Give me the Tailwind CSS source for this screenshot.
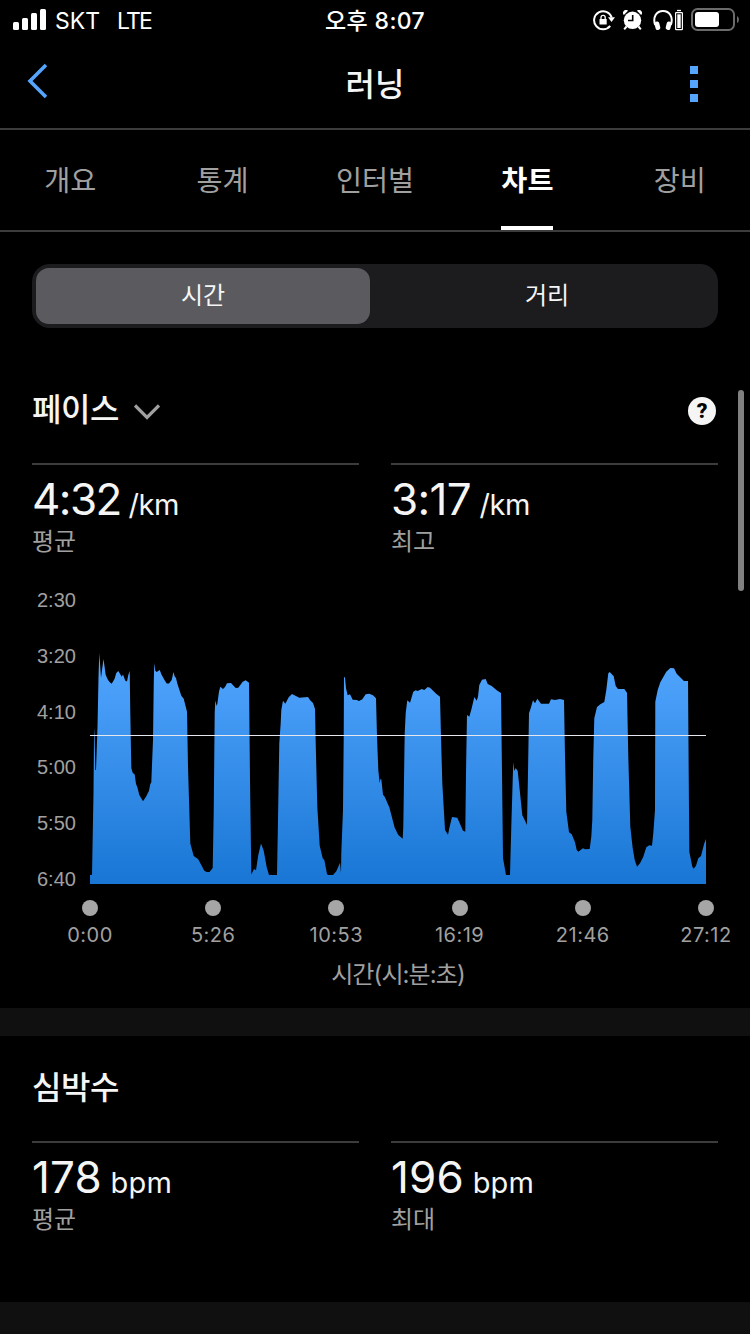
<!doctype html>
<html lang="ko">
	<head>
		<meta charset="UTF-8" />
		<meta name="viewport" content="width=device-width, initial-scale=1.0" />
		<title>러닝</title>
		<script src="https://cdn.jsdelivr.net/npm/@tailwindcss/browser@4"></script>
	</head>
	<body
		class="relative h-[1334px] w-[750px] overflow-hidden bg-black font-['Inter','Noto_Sans_CJK_KR',sans-serif] text-[#f5f5f5]"
	>
		<!-- Status bar -->
		<div class="grid h-10 grid-cols-3 items-center text-white">
			<div class="flex items-center pl-[13px] text-[23px] leading-[38px]">
				<svg class="mr-[9px] -mt-px h-[21px] w-[33px]" viewBox="0 0 33 21" fill="currentColor">
					<rect x="0" y="13" width="6" height="8" rx="1.5" />
					<rect x="9" y="9" width="6" height="12" rx="1.5" />
					<rect x="18" y="4" width="6" height="17" rx="1.5" />
					<rect x="27" y="0" width="6" height="21" rx="1.5" />
				</svg>
				<span class="pt-0.5">SKT</span>
				<span class="ml-[17px] pt-0.5 tracking-[-1.8px]">LTE</span>
			</div>
			<div class="pt-px text-center text-[23px] leading-[38px] font-medium tracking-[0.4px]">오후 8:07</div>
			<div class="flex items-center justify-end pr-[11px]">
				<!-- Rotation lock -->
				<svg class="mr-[8px] h-[22px] w-[22px]" viewBox="0 0 22 22" fill="none" stroke="#fff" stroke-width="2">
					<path d="M17.2 16.8A9 9 0 1 1 18.7 8.5" />
					<path d="M15 8.3h7l-3.5 4.6z" fill="#fff" stroke="none" />
					<rect x="6.5" y="10" width="7.2" height="5.6" rx=".6" fill="#fff" stroke="none" />
					<path d="M8 10.2V8.5a2.1 2.1 0 0 1 4.2 0v1.7" stroke-width="1.3" />
				</svg>
				<!-- Alarm -->
				<svg class="mr-[11px] h-5 w-[19px]" viewBox="0 0 19 20" fill="#fff">
					<circle cx="9.5" cy="10.3" r="8.7" />
					<path d="M.5 4.6A3 3 0 0 1 5 .7L.9 4.9zM18.5 4.6A3 3 0 0 0 14 .7l4.1 4.2z" />
					<path d="M3.5 16.5l-2.3 2.8M15.500 16.500l2.300 2.800" stroke="#fff" stroke-width="2" />
					<path d="M9.700 5v5.500H5" fill="none" stroke="#000" stroke-width="1.600" />
				</svg>
				<!-- Headphones with their battery -->
				<svg class="mr-[8px] h-[22px] w-[30px]" viewBox="0 0 30 22" fill="none">
					<path d="M2.200 16C-.6 8 3.500 2 10 2s10.600 6 7.800 14" stroke="#fff" stroke-width="2" />
					<rect x="2" y="12.500" width="4.800" height="8.500" rx="2" fill="#fff" transform="rotate(-14 4.400 16.700)" />
					<rect x="13.200" y="12.500" width="4.800" height="8.500" rx="2" fill="#fff" transform="rotate(14 15.600 16.700)" />
					<rect x="22.600" y="3.600" width="6.800" height="17" rx=".6" stroke="#fff" stroke-width="1.200" />
					<path d="M24 1.500h4" stroke="#fff" stroke-width="1.300" />
					<rect x="24.300" y="5.300" width="3.400" height="13.700" fill="#fff" />
				</svg>
				<!-- Phone battery -->
				<svg class="-mt-px h-[23px] w-12" viewBox="0 0 48 23">
					<rect x="1" y="1" width="42" height="21" rx="5.500" fill="none" stroke="#6b6b6b" stroke-width="2" />
					<rect x="4" y="4" width="24" height="15" rx="3" fill="#fff" />
					<path d="M46 8q2 1 2 3.500T46 15z" fill="#6b6b6b" />
				</svg>
			</div>
		</div>

		<!-- Header -->
		<header class="flex h-[90px] items-center justify-between border-b-2 border-[#3c3c3c] pr-[52px] pl-[27px]">
			<svg class="mt-[-6px] h-9 w-5" viewBox="0 0 20 36" fill="none" stroke="#54a5fb" stroke-width="3.600">
				<path d="M19 2 3 18l16 16" />
			</svg>
			<h1 class="ml-[13px] pt-0.5 text-[32px] leading-none font-medium">러닝</h1>
			<div class="flex flex-col gap-1.5">
				<span class="size-2 bg-[#54a5fb]"></span>
				<span class="size-2 bg-[#54a5fb]"></span>
				<span class="size-2 bg-[#54a5fb]"></span>
			</div>
		</header>

		<!-- Tabs -->
		<nav class="h-[102px] border-b-2 border-[#3c3c3c] text-[28.3px] text-[#a0a0a0]">
			<div class="-mx-1.5 grid h-[100px] grid-cols-5 justify-items-center leading-[102px]">
				<span>개요</span>
				<span>통계</span>
				<span>인터벌</span>
				<span class="h-[100px] border-b-4 border-white font-bold text-white">차트</span>
				<span>장비</span>
			</div>
		</nav>

		<!-- Time / distance switch -->
		<div class="mx-8 mt-8 grid h-16 grid-cols-[334px_1fr] rounded-[18px] bg-[#1c1c1e] p-1 text-center text-2xl leading-[56px]">
			<div class="rounded-[13px] bg-[#5b5a5f]">시간</div>
			<div class="pl-2.5">거리</div>
		</div>

		<main>
			<!-- Pace -->
			<section class="h-[680px] px-8 pt-[60px]">
				<div class="flex h-[42px] items-center">
					<h2 class="pt-0.5 text-[32px] leading-[42px] font-medium tracking-[-0.4px]">페이스</h2>
					<svg class="mt-1.5 ml-[15px] h-4 w-[26px]" viewBox="0 0 26 16" fill="none" stroke="#a0a0a0" stroke-width="3.200">
						<path d="m1 1.500 12 12 12-12" />
					</svg>
					<span
						class="mt-1 mr-0.5 ml-auto flex size-7 items-center justify-center rounded-full bg-[#f5f5f5] pt-px font-['Roboto',sans-serif] text-[21px] leading-none font-black text-black"
						>?</span
					>
				</div>
				<div class="mt-[33px] grid grid-cols-2 gap-8">
					<div class="border-t-2 border-[#3c3c3c]">
						<p class="mt-[7px] text-[44px] leading-[54px] tracking-[-1.6px]">4:32 <span class="ml-[-3px] text-[29px] tracking-[-0.4px]">/km</span></p>
						<p class="-mt-1 text-2xl leading-7 text-[#a0a0a0]">평균</p>
					</div>
					<div class="border-t-2 border-[#3c3c3c]">
						<p class="mt-[7px] text-[44px] leading-[54px] tracking-[-0.7px]">3:17 <span class="ml-[-3px] text-[29px] tracking-[-0.4px]">/km</span></p>
						<p class="-mt-1 text-2xl leading-7 text-[#a0a0a0]">최고</p>
					</div>
				</div>

				<!-- Chart: y labels, then the plot -->
				<div class="mt-[34px] flex h-[295px]">
					<div class="flex w-[58px] flex-col gap-[35.800px] pl-[5px] font-['Liberation_Sans',sans-serif] text-[20px] leading-5 text-[#a0a0a0]">
						<span>2:30</span>
						<span>3:20</span>
						<span>4:10</span>
						<span>5:00</span>
						<span>5:50</span>
						<span>6:40</span>
					</div>
					<svg class="h-[295px] w-[616px] shrink-0" viewBox="90 590 616 295">
						<defs>
							<linearGradient id="pace" gradientUnits="userSpaceOnUse" x1="0" y1="654" x2="0" y2="884">
								<stop offset="0" stop-color="#52a6ff" />
								<stop offset="1" stop-color="#1976d4" />
							</linearGradient>
						</defs>
						<path
							fill="url(#pace)"
							d="M90 884V875H92L93.500 793 94 737 94.500 728 95.300 770H96L97.500 727 98.500 677 99.300 653 101 678 102.300 668 103.500 659 105.700 675 108 680 110 682.500 111.700 683.700 114.500 679 116.300 673 118.300 671 121.700 676.700 123 674.500 125.300 680.700 127 681.500 128.300 675 129.700 671 130.300 713 131.300 768 132.700 772.700 134.700 774.500 136 784 137.300 787 139.300 795 143 801.300 146 796.700 149 790.700 150.300 784 151.300 782.500 153 740 153.800 680 154.300 663 155.300 670.700 156.700 672 159.700 670 161.700 675 164.500 680 166.700 683.500H169L171.700 680 173.500 672 174.700 676.500 176 678 177.300 683.500 181.300 695.700 183.700 698.700 187 711.700 188 766.700 190.300 843.500 193.700 856 198 859 201.700 865.700 204.300 870.700 206.700 872H209.500L212.700 868 213.700 813 214.700 713 215.300 700.500 216.700 706 217.300 704 219 691.500 220.300 686.700 223 689 225 687 227 683.300 231 683 235.700 688 238.300 687.700 242.700 681.700 245.700 680.300 249 682.700 250 780 251.300 874.500
							254 869 256 870.300 258.300 855 261 843.500 263.700 850.700 266.700 867.300 269 875H277L278 820 279.300 743.300 280.700 723.300 281.300 710 283 700.700 285.300 703.700 288.700 697.300 292 694 299.300 697.700 308 697 310 700 313 703 315 709 315.700 743 317.300 806.700 319.700 845.700 322.700 858.300 324.300 860 327 874 328 875H333L336.300 871.300 340 862.700 341 873.300 341.300 853 343 810 343.700 740 344 676.700 345 677.700 346 688.300 347.700 695.300 350 694.300 352.700 699.700 356.700 700 359 701 362.300 699.300 365.700 694.300 369.300 693.700 373 695.300 376 698.300 377 736.700 378.300 770 379.700 783.300 380.300 779.300H381.300L383 794.700 384.700 796.700 389.300 807.300 394.700 827.700 398.300 835 402.700 838.700 403.300 826.700 404.700 733.300 405.700 713.300 407.300 700.300 410 702.700 413.300 691.700 415.700 690.300 417.700 691 421.700 689 424.300 690 427.700 687 430 687.700 436.700 694.300 440 696.700 441 736.700 442.300 783.300 445 830 448 834.700 449.300 828.300 452 817 457.300 817.700 463 830.700 465.300 831.700
							466 773 467 715 469.300 716.700 471.700 708.300 474.300 697 476.700 700.700 478 696.700 479.300 685 482 679.700 485.700 679 487.700 684 491.700 686 496.700 690.300 501 693 502 773 503 858.300 506 875H510L511.300 826.700 512.700 780 513.300 762 514.300 771 515.700 768 517.700 771 519.700 790 522.300 815.300 524.700 820 527 825 528 773 529 713.300 530.700 708.300 533 700.300 535 703.300 537.300 698.700 541 703.700H549L551 699.300 555 700 560 699 564 700 565 756.700 566.300 811.700 569 832.300 571.700 834.300 575 842.300 576.700 850 578.300 851.700 583 848.300 585 849.300 589.700 849 591.300 836.700 592.300 820 593.300 756.700 594.300 718.300 597 707 600.300 704.300 604.300 702 606.300 690 608.300 673.300 609.700 672 613.700 676.300 615.700 686 618 689H624.300L627 692.700 628.300 756.700 630.300 826.700 632.700 848.300 634.700 860 637 866.700 640 863.300 643.300 856.700 646.300 847.300 649.300 845.300 652 845.700 653.300 833.300 655 810 655.300 701.700 657.700 690 660.300 682.300 666.300 671.700 670.300 668 674 668.300 676.700 673.700 684 681H688L688.700 773 689.300 851.700 692.300 866.700 693.700 868.700 696 865.700 698.300 858.300 701 856 704.300 843.300 706 839V884Z"
						/>
						<path d="M90 735.500h616" stroke="#e6e6ee" stroke-width="1.200" />
					</svg>
				</div>

				<!-- Time axis, each label centred under its dot -->
				<div class="mt-[15px] ml-[58px] flex h-12 w-[616px] justify-between text-[20px] leading-6 tracking-[0.5px] whitespace-nowrap text-[#a0a0a0]">
					<div class="flex w-0 flex-col items-center gap-[7px]"><i class="size-4 shrink-0 rounded-full bg-[#a6a6a6]"></i>0:00</div>
					<div class="flex w-0 flex-col items-center gap-[7px]"><i class="size-4 shrink-0 rounded-full bg-[#a6a6a6]"></i>5:26</div>
					<div class="flex w-0 flex-col items-center gap-[7px]"><i class="size-4 shrink-0 rounded-full bg-[#a6a6a6]"></i>10:53</div>
					<div class="flex w-0 flex-col items-center gap-[7px]"><i class="size-4 shrink-0 rounded-full bg-[#a6a6a6]"></i>16:19</div>
					<div class="flex w-0 flex-col items-center gap-[7px]"><i class="size-4 shrink-0 rounded-full bg-[#a6a6a6]"></i>21:46</div>
					<div class="flex w-0 flex-col items-center gap-[7px]"><i class="size-4 shrink-0 rounded-full bg-[#a6a6a6]"></i>27:12</div>
				</div>
				<p class="mt-[11px] ml-[58px] w-[616px] text-center text-2xl leading-8 tracking-[-0.9px] text-[#a0a0a0]">시간(시:분:초)</p>
			</section>

			<!-- Heart rate -->
			<section class="h-[294px] border-t-[28px] border-[#101010] px-8 pt-[30px]">
				<h2 class="pt-px text-[32px] leading-[42px] font-medium tracking-[-0.4px]">심박수</h2>
				<div class="mt-8 grid grid-cols-2 gap-8">
					<div class="border-t-2 border-[#3c3c3c]">
						<p class="mt-[7px] text-[44px] leading-[54px] tracking-[0.2px]">178 <span class="ml-[-4px] text-[29px]">bpm</span></p>
						<p class="-mt-1 text-2xl leading-7 text-[#a0a0a0]">평균</p>
					</div>
					<div class="border-t-2 border-[#3c3c3c]">
						<p class="mt-[7px] text-[44px] leading-[54px] tracking-[0.2px]">196 <span class="ml-[-4px] text-[29px]">bpm</span></p>
						<p class="-mt-1 text-2xl leading-7 text-[#a0a0a0]">최대</p>
					</div>
				</div>
			</section>
			<div class="h-8 bg-[#101010]"></div>
		</main>

		<!-- Scroll indicator -->
		<div class="absolute top-[390px] right-[6px] h-[201px] w-1.5 rounded-full bg-[#808080]"></div>
	</body>
</html>
